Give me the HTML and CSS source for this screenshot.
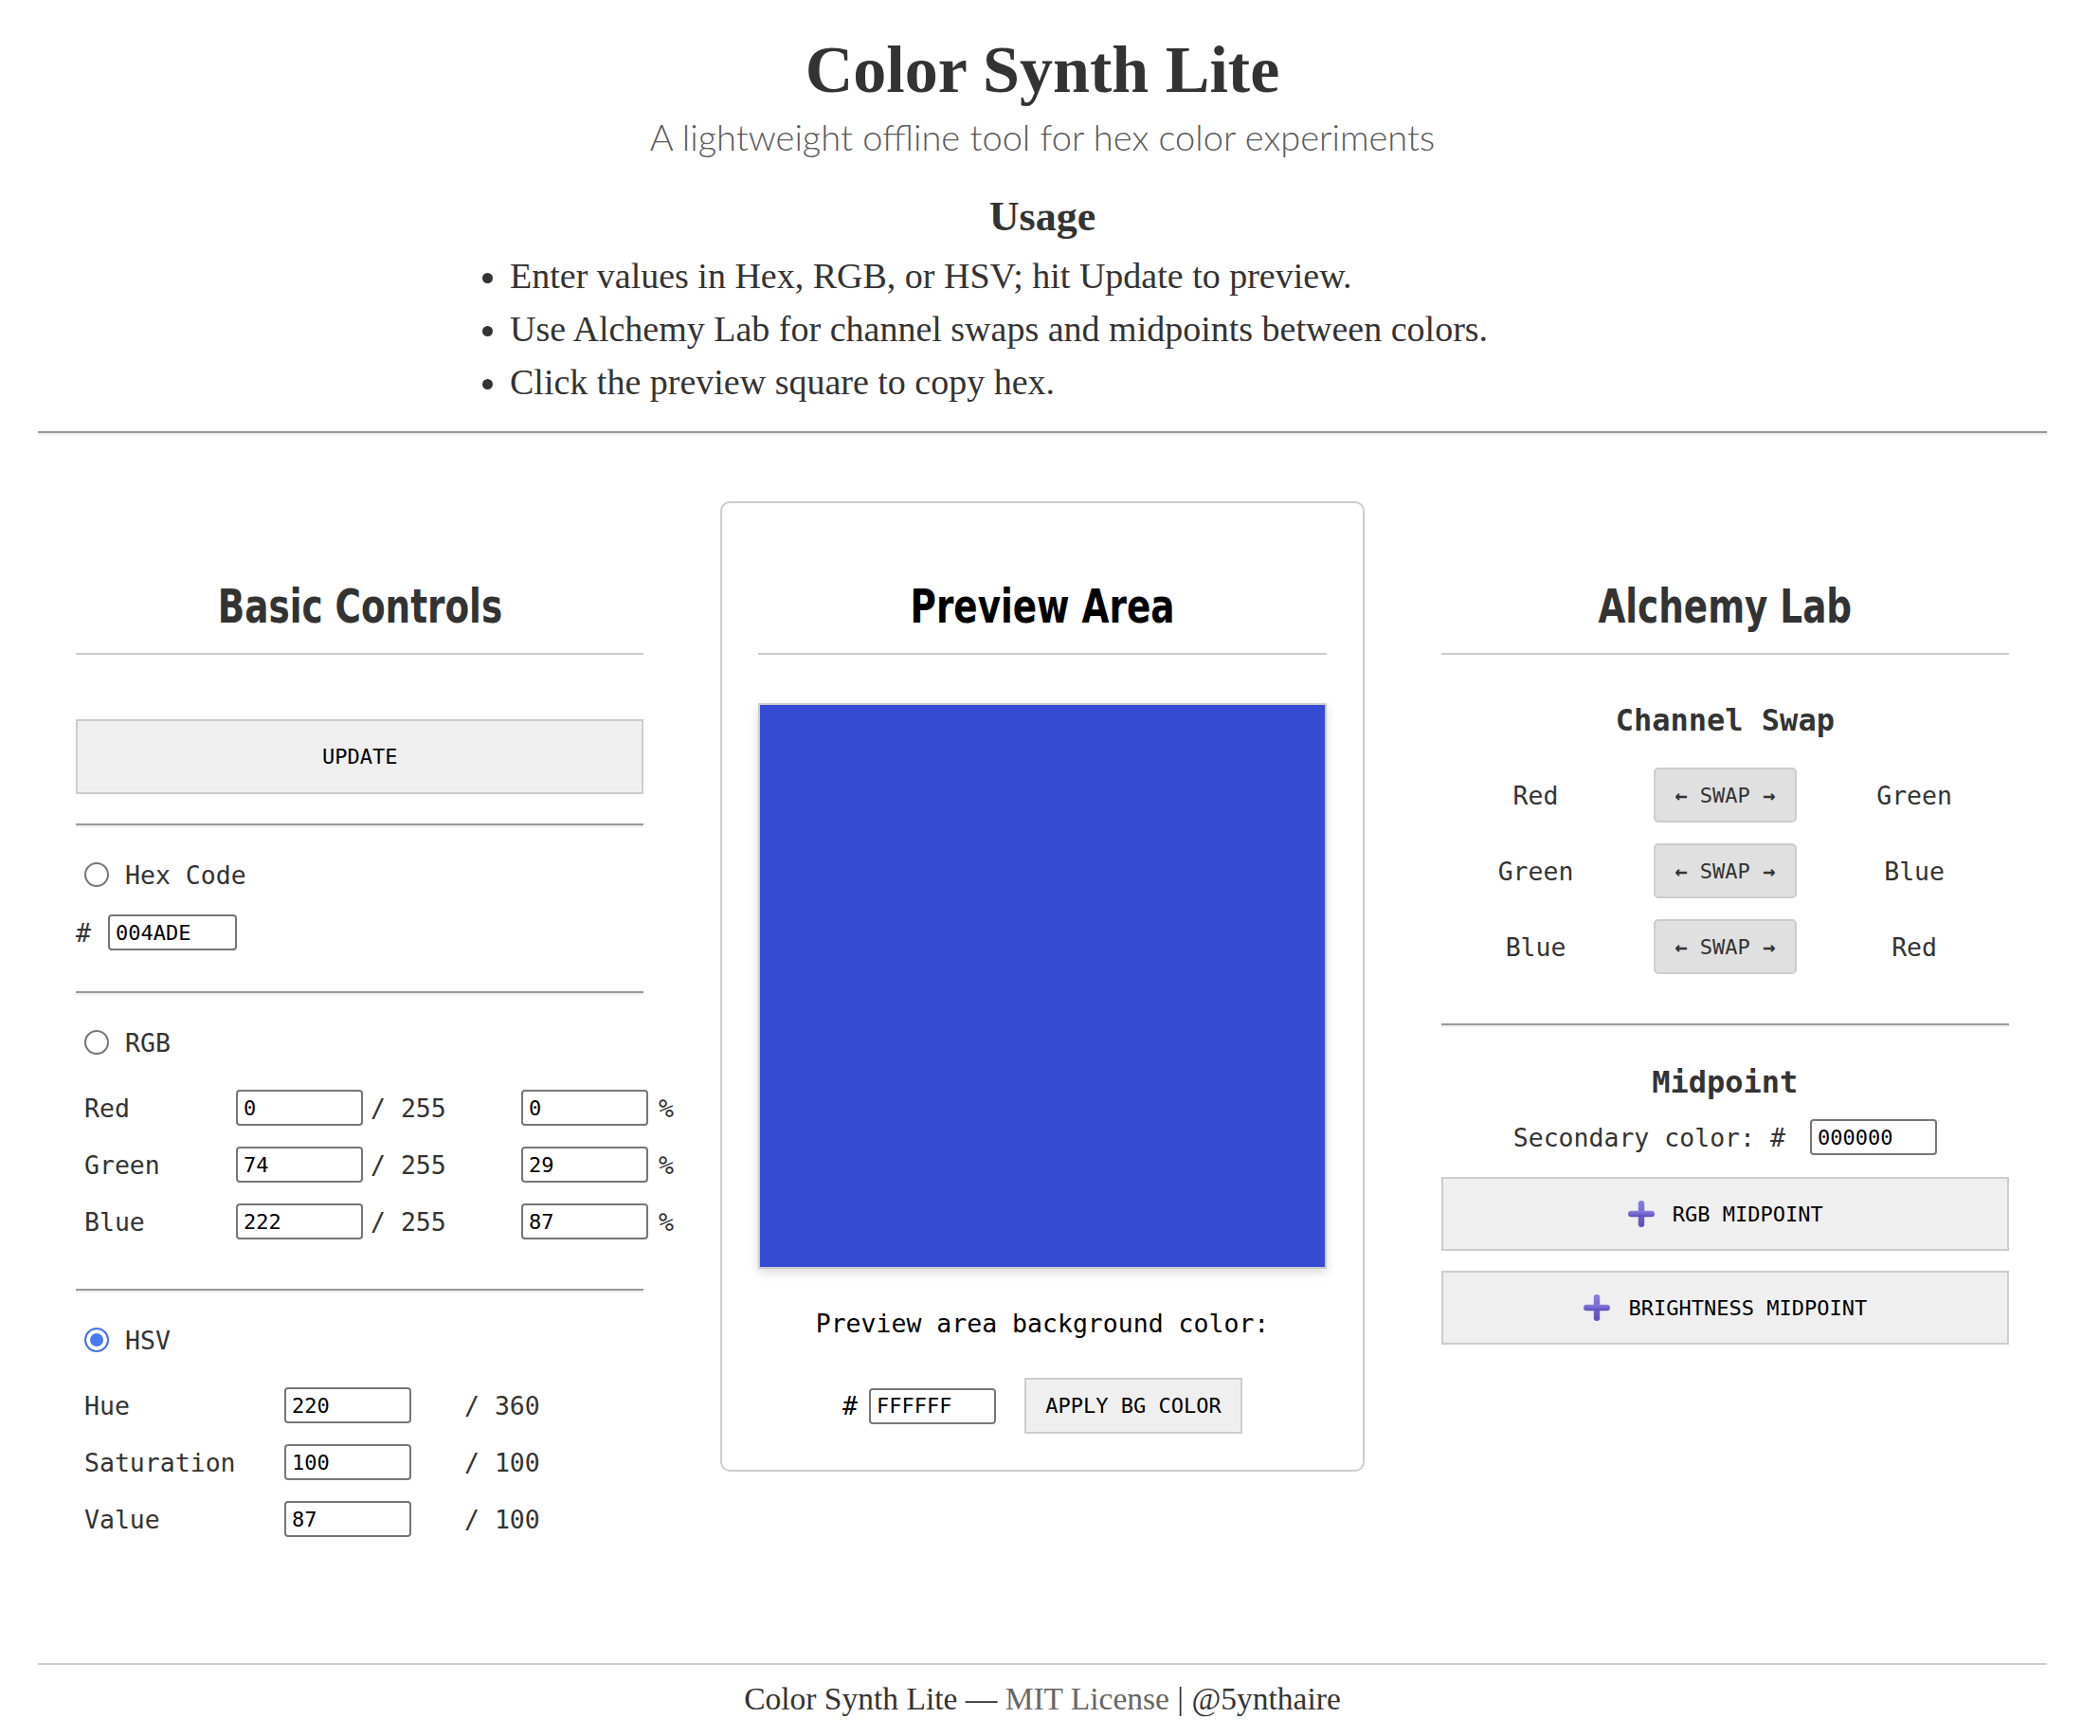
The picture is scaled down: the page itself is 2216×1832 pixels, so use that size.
FILE: index.html
```html
<!DOCTYPE html>
<html lang="en">
<head>
<meta charset="utf-8">
<title>Color Synth Lite</title>
<link rel="stylesheet" href="styles.css">
</head>
<body>
<div class="page">
  <header class="site-header">
    <h1 class="title">Color Synth Lite</h1>
    <p class="subtitle">A lightweight offline tool for hex color experiments</p>
    <h2 class="usage-title">Usage</h2>
    <ul class="usage-list">
      <li>Enter values in Hex, RGB, or HSV; hit Update to preview.</li>
      <li>Use Alchemy Lab for channel swaps and midpoints between colors.</li>
      <li>Click the preview square to copy hex.</li>
    </ul>
  </header>
  <hr class="rule-page">

  <main class="panels">
    <section class="panel">
      <h2 class="panel-title"><span class="panel-title-text">Basic Controls</span></h2>
      <button class="btn btn-update">UPDATE</button>
      <hr class="rule rule-after-update">

      <div class="mode">
        <label class="radio-label"><input type="radio" name="mode" class="radio">Hex Code</label>
        <div class="hex-row"><span>#</span><input class="field" type="text" value="004ADE"></div>
      </div>
      <hr class="rule rule-after-hex">

      <div class="mode">
        <label class="radio-label"><input type="radio" name="mode" class="radio">RGB</label>
        <div class="grid-rgb">
          <span>Red</span><input class="field" type="text" value="0"><span class="unit">/ 255</span><input class="field" type="text" value="0"><span class="pct">%</span>
          <span>Green</span><input class="field" type="text" value="74"><span class="unit">/ 255</span><input class="field" type="text" value="29"><span class="pct">%</span>
          <span>Blue</span><input class="field" type="text" value="222"><span class="unit">/ 255</span><input class="field" type="text" value="87"><span class="pct">%</span>
        </div>
      </div>
      <hr class="rule rule-after-rgb">

      <div class="mode">
        <label class="radio-label"><input type="radio" name="mode" class="radio" checked>HSV</label>
        <div class="grid-hsv">
          <span>Hue</span><input class="field" type="text" value="220"><span class="unit">/ 360</span>
          <span>Saturation</span><input class="field" type="text" value="100"><span class="unit">/ 100</span>
          <span>Value</span><input class="field" type="text" value="87"><span class="unit">/ 100</span>
        </div>
      </div>
    </section>

    <section class="panel panel-card">
      <h2 class="panel-title"><span class="panel-title-text">Preview Area</span></h2>
      <div class="preview"></div>
      <p class="bg-label">Preview area background color:</p>
      <div class="bg-row">
        <span>#</span>
        <input class="field" type="text" value="FFFFFF">
        <button class="btn btn-apply">APPLY BG COLOR</button>
      </div>
    </section>

    <section class="panel">
      <h2 class="panel-title"><span class="panel-title-text">Alchemy Lab</span></h2>
      <h3 class="sub-title sub-swap">Channel Swap</h3>
      <div class="swap-grid">
        <span>Red</span><button class="swap-btn"><span class="arrow">&larr;</span> SWAP <span class="arrow">&rarr;</span></button><span>Green</span>
        <span>Green</span><button class="swap-btn"><span class="arrow">&larr;</span> SWAP <span class="arrow">&rarr;</span></button><span>Blue</span>
        <span>Blue</span><button class="swap-btn"><span class="arrow">&larr;</span> SWAP <span class="arrow">&rarr;</span></button><span>Red</span>
      </div>
      <hr class="rule rule-after-swap">
      <h3 class="sub-title sub-mid">Midpoint</h3>
      <div class="secondary-row"><span>Secondary color: #</span><input class="field" type="text" value="000000"></div>
      <button class="btn btn-mid btn-mid-rgb">
        <svg class="plus" viewBox="0 0 28 28" aria-hidden="true"><defs><linearGradient id="pg" x1="0" y1="0" x2="0" y2="1"><stop offset="0" stop-color="#8c7fe0"/><stop offset="1" stop-color="#5e4cbc"/></linearGradient></defs><rect x="11" y="1" width="6" height="26" rx="3" fill="url(#pg)"/><rect x="1" y="11" width="26" height="6" rx="3" fill="url(#pg)"/></svg>
        <span>RGB MIDPOINT</span>
      </button>
      <button class="btn btn-mid btn-mid-bright">
        <svg class="plus" viewBox="0 0 28 28" aria-hidden="true"><rect x="11" y="1" width="6" height="26" rx="3" fill="url(#pg)"/><rect x="1" y="11" width="26" height="6" rx="3" fill="url(#pg)"/></svg>
        <span>BRIGHTNESS MIDPOINT</span>
      </button>
    </section>
  </main>

  <footer class="site-footer">
    Color Synth Lite &mdash; <a href="#" class="footer-link">MIT License</a> | @5ynthaire
  </footer>
</div>
</body>
</html>
```

FILE: styles.css
```css
* { box-sizing: border-box; }

body {
  margin: 8px;
  background: #fff;
  color: #333;
  font-family: "Liberation Serif", serif;
}

.page { padding: 0 48px 0 32px; }

/* Header */
.site-header { text-align: center; }

.title {
  margin: 26px 0 0;
  font: bold 70px/80px "Liberation Serif", serif;
  color: #333;
}

.subtitle {
  margin: 10px 0 0;
  font: 300 38px/40px "Lato", "Inter", sans-serif;
  color: #5a5a5a;
}

.usage-title {
  margin: 39px 0 0;
  font: bold 44px/52px "Liberation Serif", serif;
  color: #333;
}

.usage-list {
  max-width: 1200px;
  margin: 8px auto 0;
  padding-left: 38px;
  text-align: left;
  font-size: 38px;
  line-height: 56px;
}

.rule-page {
  height: 0;
  margin: 24px 0 0;
  border: 0;
  border-top: 2px solid #999;
  border-bottom: 2px solid #eee;
}

/* Panels */
.panels {
  display: flex;
  align-items: flex-start;
  gap: 41px;
  margin-top: 70px;
  font-family: "DejaVu Sans Mono", monospace;
  font-size: 26.5px;
  color: #333;
}

.panel {
  flex: 1 1 0;
  min-width: 0;
  padding: 38px;
  border: 2px solid transparent;
}

.panel-card {
  border-color: #ccc;
  border-radius: 10px;
  color: #000;
}

.panel-title {
  margin: 41px 0 0;
  padding-bottom: 19px;
  border-bottom: 2px solid #ccc;
  text-align: center;
  font: bold 50px/60px "DejaVu Sans Condensed", sans-serif;
  color: #333;
}

.panel-title-text {
  display: inline-block;
  transform: scaleX(0.83);
}

.panel-card .panel-title { color: #000; }

.rule {
  height: 0;
  margin: 31px 0 0;
  border: 0;
  border-top: 2px solid #999;
  border-bottom: 2px solid #eee;
}

.rule-after-hex { margin-top: 43px; }
.rule-after-rgb { margin-top: 52px; }
.rule-after-swap { margin-top: 52px; }

.btn {
  font: 22px "DejaVu Sans Mono", monospace;
  color: #000;
  background: #efefef;
  border: 2px solid #ccc;
  cursor: pointer;
}

.btn-update {
  display: block;
  width: 100%;
  height: 79px;
  margin-top: 68px;
}

.field {
  width: 136px;
  height: 38px;
  margin: 0;
  padding: 0 6px;
  border: 2px solid #767676;
  border-radius: 4px;
  font: 22px "DejaVu Sans Mono", monospace;
  color: #000;
  background: #fff;
}

/* Mode sections */
.radio-label {
  display: flex;
  align-items: center;
  gap: 17px;
  height: 40px;
  margin-top: 30px;
  padding-left: 9px;
}

.radio {
  appearance: none;
  -webkit-appearance: none;
  width: 26px;
  height: 26px;
  margin: 0;
  border: 2px solid #767676;
  border-radius: 50%;
  background: #fff;
}

.radio:checked {
  border-color: #4a72e8;
  background: #4a7af0;
  box-shadow: inset 0 0 0 4px #fff;
}

.hex-row {
  display: flex;
  align-items: center;
  gap: 18px;
  height: 38px;
  margin-top: 22px;
}

.grid-rgb,
.grid-hsv {
  display: grid;
  align-items: center;
  row-gap: 22px;
  margin-top: 30px;
  padding-left: 9px;
}

.grid-rgb { grid-template-columns: 160px 134px 167px 134px auto; }
.grid-rgb .field,
.grid-hsv .field { width: 134px; }
.grid-rgb .unit { padding-left: 8px; }
.grid-rgb .pct { padding-left: 11px; }

.grid-hsv { grid-template-columns: 211px 134px auto; }
.grid-hsv .unit { padding-left: 56px; }

/* Preview card */
.preview {
  height: 597px;
  margin-top: 51px;
  border: 2px solid #ccc;
  background: #364bd4;
  box-shadow: 0 4px 10px rgba(0, 0, 0, 0.15);
  cursor: pointer;
}

.bg-label {
  margin: 38px 0 0;
  line-height: 40px;
  text-align: center;
}

.bg-row {
  display: flex;
  justify-content: center;
  align-items: center;
  margin-top: 37px;
}

.bg-row .field { margin-left: 12px; width: 134px; }

.btn-apply {
  width: 230px;
  height: 59px;
  margin-left: 30px;
}

/* Alchemy */
.sub-title {
  margin: 0;
  font: bold 32px/40px "DejaVu Sans Mono", monospace;
  text-align: center;
  color: #333;
}

.sub-swap { margin-top: 49px; }
.sub-mid { margin-top: 38px; }

.swap-grid {
  display: grid;
  grid-template-columns: repeat(3, 1fr);
  align-items: center;
  justify-items: center;
  row-gap: 22px;
  margin-top: 30px;
}

.swap-btn {
  width: 151px;
  height: 58px;
  font: 22px "DejaVu Sans Mono", monospace;
  color: #333;
  background: #e0e0e0;
  border: 2px solid #ccc;
  border-radius: 5px;
}

.arrow { font-weight: bold; }

.secondary-row {
  display: flex;
  justify-content: center;
  align-items: center;
  height: 38px;
  margin-top: 19px;
}

.secondary-row .field { margin-left: 26px; width: 134px; }

.btn-mid {
  display: flex;
  width: 100%;
  height: 78px;
  align-items: center;
  justify-content: center;
  gap: 18px;
}

.btn-mid-rgb { margin-top: 23px; }
.btn-mid-bright { margin-top: 21px; }

.plus { width: 30px; height: 30px; }

/* Footer */
.site-footer {
  margin-top: 93px;
  padding-top: 16px;
  border-top: 2px solid #ccc;
  text-align: center;
  font: 33.5px/40px "Liberation Serif", serif;
  color: #333;
}

.footer-link { color: #666; text-decoration: none; }
```
